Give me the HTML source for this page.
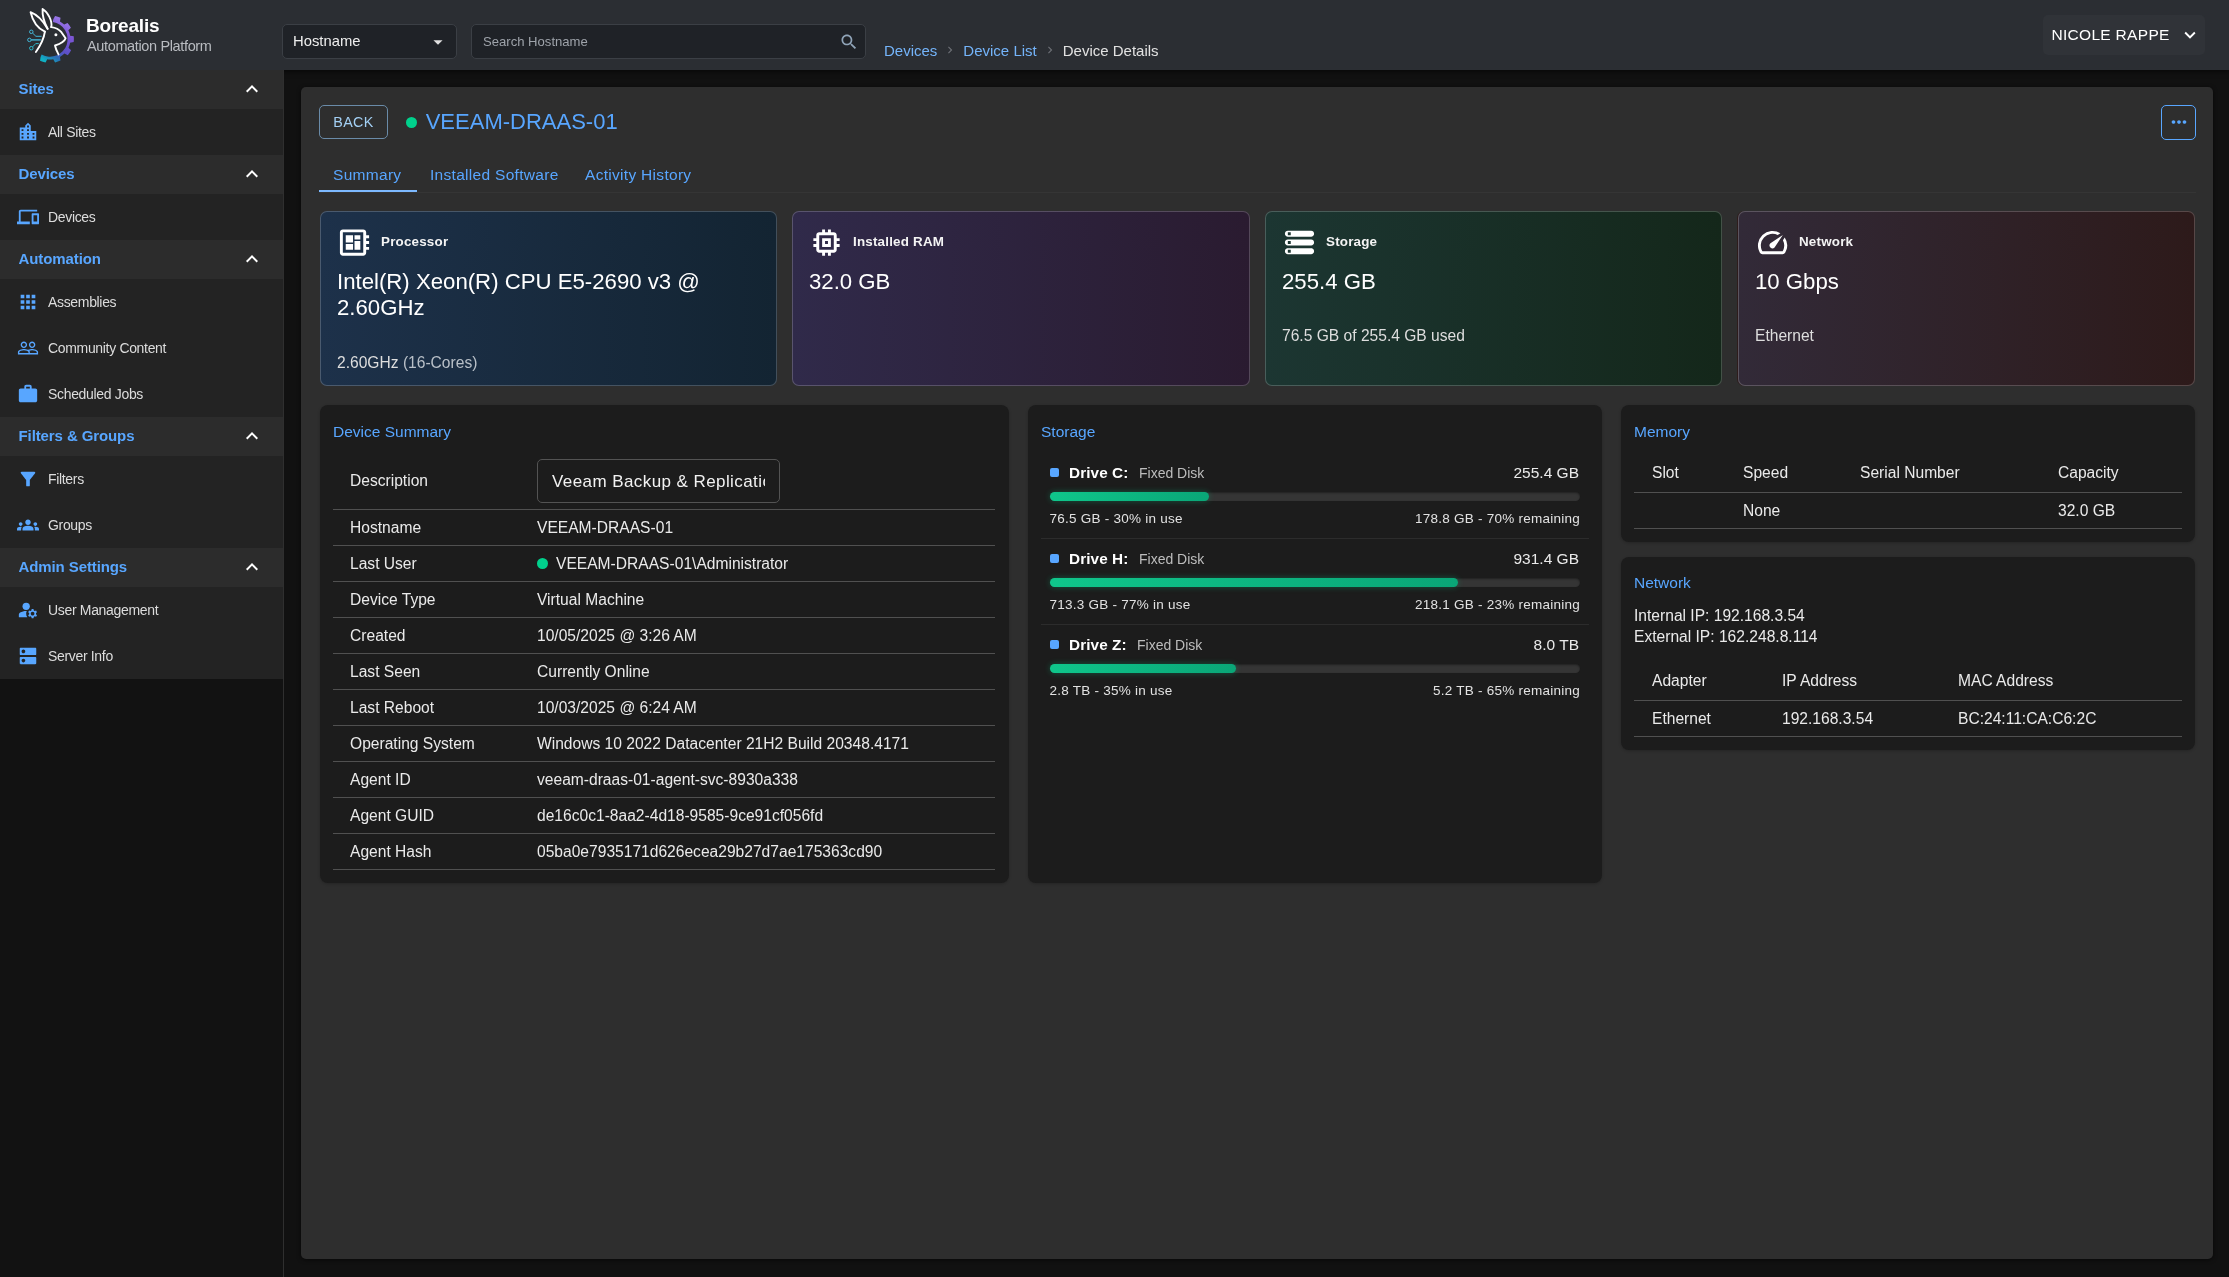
<!DOCTYPE html>
<html lang="en">
<head>
<meta charset="utf-8">
<title>Borealis - Device Details</title>
<style>
*{box-sizing:border-box;margin:0;padding:0}
html,body{width:2229px;height:1277px;overflow:hidden;background:#111111;}
body{font-family:"Liberation Sans",sans-serif;color:#e6e6e6;position:relative;-webkit-font-smoothing:antialiased}
.abs{position:absolute}
svg{display:block}
/* header */
#hdr{position:absolute;left:0;top:0;width:2229px;height:70px;background:#2b2e33;z-index:5;box-shadow:0 2px 5px rgba(0,0,0,.55)}
#brand1{position:absolute;left:86px;top:14px;font-size:19px;font-weight:700;color:#fff;letter-spacing:-.2px;line-height:24px}
#brand2{position:absolute;left:87px;top:37px;font-size:14.5px;color:#b9bcc1;line-height:18px;letter-spacing:-.36px}
.hbox{position:absolute;top:24px;height:35px;background:#1f2227;border:1px solid #3b3f45;border-radius:5px}
#sel{left:282px;width:175px}
#sel span{position:absolute;left:10px;top:7px;font-size:14.8px;line-height:18px;color:#eee}
#srch{left:471px;width:395px}
#srch span{position:absolute;left:11px;top:8px;font-size:13.1px;line-height:18px;color:#9ea3aa}
#crumbs{position:absolute;left:884px;top:41px;font-size:15px;line-height:20px;white-space:nowrap;color:#e2e2e2}
#crumbs a{color:#74b4fa;text-decoration:none}
#crumbs i{display:inline-block;width:26px;text-align:center;color:#7a7d82;font-style:normal}
#user{position:absolute;left:2043px;top:15px;width:162px;height:40px;background:#303338;border-radius:5px}
#user span{position:absolute;left:8.5px;top:10px;font-size:15.5px;line-height:20px;color:#fff;letter-spacing:.3px}
/* sidebar */
#side{position:absolute;z-index:6;left:0;top:70px;width:284px;height:1207px;background:#121212;border-right:1px solid #2f2f2f}
.sh{height:39px;background:#2c2c2c;position:relative}
.sh b{position:absolute;left:18.5px;top:8.6px;font-size:15px;letter-spacing:-.1px;line-height:19px;color:#58a6ff;font-weight:700}
.sh svg{position:absolute;left:240px;top:7.3px}
.si{height:46px;background:#232323;position:relative}
.si span{position:absolute;left:48px;top:13.6px;font-size:14px;letter-spacing:-.33px;line-height:18px;color:#dcdcdc}
.si svg{position:absolute;left:17px;top:11.5px;width:22px;height:22px}
</style>
</head>
<body>
<div id="all" style="position:absolute;left:0;top:0;width:2229px;height:1277px;will-change:transform">
<div id="hdr">
<!--LOGO_START--><svg class="abs" style="left:20px;top:0" width="70" height="70" viewBox="0 0 70 70">
<defs><linearGradient id="gg" gradientUnits="userSpaceOnUse" x1="50" y1="16" x2="24" y2="60"><stop offset="0" stop-color="#a98cf2"/><stop offset=".35" stop-color="#7d56d6"/><stop offset=".68" stop-color="#5a50c6"/><stop offset=".84" stop-color="#2a6db4"/><stop offset="1" stop-color="#0fb0c4"/></linearGradient></defs>
<path fill="url(#gg)" d="M32.84 21.92L33.28 19.15A20.3 20.3 0 0 1 33.28 19.15L35.05 15.92A23.8 23.8 0 0 1 40.53 17.81L39.94 21.45A20.3 20.3 0 0 1 44.20 24.60L47.51 22.97A23.8 23.8 0 0 1 50.92 27.66L48.35 30.30A20.3 20.3 0 0 1 50.09 35.67L53.72 36.30A23.8 23.8 0 0 1 53.72 42.10L50.09 42.73A20.3 20.3 0 0 1 48.50 47.78L51.11 50.37A23.8 23.8 0 0 1 47.79 55.13L44.45 53.55A20.3 20.3 0 0 1 39.94 56.95L40.53 60.59A23.8 23.8 0 0 1 35.05 62.48L33.28 59.25A20.3 20.3 0 0 1 27.27 59.30L25.56 62.56A23.8 23.8 0 0 1 20.04 60.77L20.57 57.12L21.62 54.51A17.5 17.5 0 1 0 32.84 21.92Z"/>
<g fill="none" stroke="#fff" stroke-width="1.9" stroke-linejoin="round" stroke-linecap="round">
<path d="M24.9 31.6C20.5 29.6 13.6 25 10.6 12.200 16.800 14.600 23.400 21.400 27.600 28.800"/>
<path d="M27.600 28.800C24 22 22.200 15 22.600 9 27.500 12 32.800 21 31.200 27.100"/>
<path d="M31.200 27.100C35.500 27.600 39 29.200 41.400 32.200L45.600 38.300C44.600 41.600 41.200 43.600 35 45.500 35.700 49 37 51.800 38.500 54.400"/>
<path d="M24.900 31.600C24 38 21.500 44 15.900 52"/>
</g>
<circle cx="35.900" cy="34.800" r="1.500" fill="#fff"/>
<g fill="none" stroke="#45c3e6" stroke-width="0.9">
<circle cx="11.300" cy="31.800" r="1.750"/><path d="M12.600 33.100L15.900 36.300H21.600"/>
<circle cx="9.400" cy="39.900" r="1.750"/><path d="M11.200 39.900H20.800" stroke-width="1.300"/>
<circle cx="11.300" cy="48.200" r="1.750" stroke="#2fc4d8"/><path d="M12.600 46.900L15.700 43.600H18.800" stroke="#2fc4d8"/>
</g>
</svg><!--LOGO_END-->
<div id="brand1">Borealis</div>
<div id="brand2">Automation Platform</div>
<div id="sel" class="hbox"><span>Hostname</span>
<svg class="abs" style="left:144px;top:6px" width="22" height="22" viewBox="0 0 24 24"><path fill="#e0e0e0" d="M7 10l5 5 5-5z"/></svg></div>
<div id="srch" class="hbox"><span>Search Hostname</span>
<svg class="abs" style="left:367px;top:7px" width="20" height="20" viewBox="0 0 24 24"><path fill="#90a4b8" d="M15.5 14h-.79l-.28-.27C15.41 12.59 16 11.11 16 9.5 16 5.910 13.090 3 9.500 3S3 5.910 3 9.500 5.910 16 9.500 16c1.610 0 3.090-.590 4.230-1.570l.270.280v.790l5 4.990L20.490 19l-4.990-5zm-6 0C7.010 14 5 11.990 5 9.500S7.010 5 9.500 5 14 7.010 14 9.500 11.990 14 9.500 14z"/></svg></div>
<div id="crumbs"><a>Devices</a><i><svg width="14" height="14" viewBox="0 0 24 24" style="display:inline-block;vertical-align:-1.4px"><path fill="#6c6f75" d="M10 6 8.590 7.410 13.170 12l-4.580 4.590L10 18l6-6z"/></svg></i><a>Device List</a><i><svg width="14" height="14" viewBox="0 0 24 24" style="display:inline-block;vertical-align:-1.4px"><path fill="#6c6f75" d="M10 6 8.590 7.410 13.170 12l-4.580 4.590L10 18l6-6z"/></svg></i>Device Details</div>
<div id="user"><span>NICOLE RAPPE</span>
<svg class="abs" style="left:136px;top:9px" width="22" height="22" viewBox="0 0 24 24"><path fill="#fff" d="M16.590 8.590 12 13.170 7.410 8.590 6 10l6 6 6-6z"/></svg></div>
</div>
<div id="side">
<div class="sh"><b>Sites</b><svg width="24" height="24" viewBox="0 0 24 24"><path fill="#fff" d="m12 8-6 6 1.410 1.410L12 10.830l4.590 4.580L18 14z"/></svg></div>
<div class="si"><svg width="24" height="24" viewBox="0 0 24 24" fill="#58a6ff"><path d="M15 11V5l-3-3-3 3v2H3v14h18V11h-6zm-8 8H5v-2h2v2zm0-4H5v-2h2v2zm0-4H5V9h2v2zm6 8h-2v-2h2v2zm0-4h-2v-2h2v2zm0-4h-2V9h2v2zm0-4h-2V5h2v2zm6 12h-2v-2h2v2zm0-4h-2v-2h2v2z"/></svg><span>All Sites</span></div>
<div class="sh"><b>Devices</b><svg width="24" height="24" viewBox="0 0 24 24"><path fill="#fff" d="m12 8-6 6 1.410 1.410L12 10.830l4.590 4.580L18 14z"/></svg></div>
<div class="si"><svg width="24" height="24" viewBox="0 0 24 24" fill="#58a6ff"><path d="M4 6h18V4H4c-1.100 0-2 .900-2 2v11H0v3h14v-3H4V6zm19 2h-6c-.550 0-1 .450-1 1v10c0 .550.450 1 1 1h6c.550 0 1-.450 1-1V9c0-.550-.450-1-1-1zm-1 9h-4v-7h4v7z"/></svg><span>Devices</span></div>
<div class="sh"><b>Automation</b><svg width="24" height="24" viewBox="0 0 24 24"><path fill="#fff" d="m12 8-6 6 1.410 1.410L12 10.830l4.590 4.580L18 14z"/></svg></div>
<div class="si"><svg width="24" height="24" viewBox="0 0 24 24" fill="#58a6ff"><path d="M4 8h4V4H4v4zm6 12h4v-4h-4v4zm-6 0h4v-4H4v4zm0-6h4v-4H4v4zm6 0h4v-4h-4v4zm6-10v4h4V4h-4zm-6 4h4V4h-4v4zm6 6h4v-4h-4v4zm0 6h4v-4h-4v4z"/></svg><span>Assemblies</span></div>
<div class="si"><svg width="24" height="24" viewBox="0 0 24 24" fill="#58a6ff"><path d="M16.500 13c-1.200 0-3.070.340-4.500 1-1.430-.670-3.300-1-4.500-1C5.330 13 1 14.080 1 16.250V19h22v-2.750c0-2.170-4.330-3.250-6.500-3.250zm-4 4.500h-10v-1.250c0-.540 2.560-1.750 5-1.750s5 1.210 5 1.750v1.250zm9 0H14v-1.250c0-.460-.200-.860-.520-1.220.880-.300 1.960-.530 3.020-.530 2.440 0 5 1.210 5 1.750v1.250zM7.500 12c1.930 0 3.500-1.570 3.500-3.500S9.430 5 7.500 5 4 6.570 4 8.500 5.570 12 7.500 12zm0-5.500c1.100 0 2 .900 2 2s-.900 2-2 2-2-.900-2-2 .900-2 2-2zm9 5.500c1.930 0 3.500-1.570 3.500-3.500S18.430 5 16.500 5 13 6.570 13 8.500s1.570 3.500 3.500 3.500zm0-5.500c1.100 0 2 .900 2 2s-.900 2-2 2-2-.900-2-2 .900-2 2-2z"/></svg><span>Community Content</span></div>
<div class="si"><svg width="24" height="24" viewBox="0 0 24 24" fill="#58a6ff"><path d="M20 6h-4V4c0-1.110-.890-2-2-2h-4c-1.110 0-2 .890-2 2v2H4c-1.110 0-1.990.890-1.990 2L2 19c0 1.110.890 2 2 2h16c1.110 0 2-.890 2-2V8c0-1.110-.890-2-2-2zm-6 0h-4V4h4v2z"/></svg><span>Scheduled Jobs</span></div>
<div class="sh"><b>Filters &amp; Groups</b><svg width="24" height="24" viewBox="0 0 24 24"><path fill="#fff" d="m12 8-6 6 1.410 1.410L12 10.830l4.590 4.580L18 14z"/></svg></div>
<div class="si"><svg width="24" height="24" viewBox="0 0 24 24" fill="#58a6ff"><path d="M4.250 5.610C6.270 8.200 10 13 10 13v6c0 .550.450 1 1 1h2c.550 0 1-.450 1-1v-6s3.720-4.800 5.740-7.390c.510-.660.040-1.610-.790-1.610H5.040c-.830 0-1.300.950-.790 1.610z"/></svg><span>Filters</span></div>
<div class="si"><svg width="24" height="24" viewBox="0 0 24 24" fill="#58a6ff"><path d="M12 12.750c1.630 0 3.070.390 4.240.900 1.080.480 1.760 1.560 1.760 2.730V18H6v-1.610c0-1.180.680-2.260 1.760-2.730 1.170-.520 2.610-.910 4.240-.910zM4 13c1.100 0 2-.900 2-2s-.900-2-2-2-2 .900-2 2 .900 2 2 2zm1.130 1.100c-.370-.060-.740-.100-1.130-.100-.990 0-1.930.210-2.780.580C.480 14.900 0 15.620 0 16.430V18h4.500v-1.610c0-.830.230-1.610.630-2.290zM20 13c1.100 0 2-.900 2-2s-.900-2-2-2-2 .900-2 2 .900 2 2 2zm4 3.430c0-.810-.480-1.530-1.220-1.850-.850-.370-1.790-.580-2.780-.580-.390 0-.760.040-1.130.100.400.680.630 1.460.630 2.290V18H24v-1.570zM12 6c1.660 0 3 1.340 3 3s-1.340 3-3 3-3-1.340-3-3 1.340-3 3-3z"/></svg><span>Groups</span></div>
<div class="sh"><b>Admin Settings</b><svg width="24" height="24" viewBox="0 0 24 24"><path fill="#fff" d="m12 8-6 6 1.410 1.410L12 10.830l4.590 4.580L18 14z"/></svg></div>
<div class="si"><svg width="24" height="24" viewBox="0 0 24 24" fill="#58a6ff"><circle cx="10" cy="8" r="4"/><path d="M10.670 13.020c-.220-.010-.440-.020-.670-.020-2.420 0-4.680.670-6.610 1.820-.880.520-1.390 1.500-1.390 2.530V20h9.260c-.790-1.130-1.260-2.510-1.260-4 0-1.070.250-2.070.670-2.980zM20.750 16c0-.220-.030-.420-.060-.630l1.140-1.010-1-1.730-1.450.490c-.320-.270-.680-.480-1.080-.630L18 11h-2l-.300 1.490c-.400.150-.760.360-1.080.630l-1.450-.490-1 1.730 1.140 1.010c-.030.210-.060.410-.060.630s.030.420.060.630l-1.140 1.010 1 1.730 1.450-.490c.320.270.680.480 1.080.630L16 21h2l.300-1.490c.400-.150.760-.360 1.080-.630l1.450.490 1-1.730-1.140-1.010c.030-.210.060-.410.060-.630zM17 18c-1.100 0-2-.900-2-2s.900-2 2-2 2 .900 2 2-.900 2-2 2z"/></svg><span>User Management</span></div>
<div class="si"><svg width="24" height="24" viewBox="0 0 24 24" fill="#58a6ff"><path d="M20 13H4c-.550 0-1 .450-1 1v6c0 .550.450 1 1 1h16c.550 0 1-.450 1-1v-6c0-.550-.450-1-1-1zM7 19c-1.100 0-2-.900-2-2s.900-2 2-2 2 .900 2 2-.900 2-2 2zM20 3H4c-.550 0-1 .450-1 1v6c0 .550.450 1 1 1h16c.550 0 1-.450 1-1V4c0-.550-.450-1-1-1zM7 9c-1.100 0-2-.900-2-2s.900-2 2-2 2 .900 2 2-.900 2-2 2z"/></svg><span>Server Info</span></div>
</div>
<style>
#paper{position:absolute;left:301px;top:87px;width:1912px;height:1172px;background:#2e2e2e;border-radius:5px;box-shadow:0 1px 4px rgba(0,0,0,.6)}
#back{position:absolute;left:319px;top:105px;width:69px;height:34px;border:1px solid #6a8ba8;border-radius:5px;color:#a3d0f5;font-size:14.3px;letter-spacing:.4px;line-height:32px;text-align:center}
#dot{position:absolute;left:405.8px;top:116.6px;width:11.5px;height:11.5px;border-radius:50%;background:#00d18c}
#title{position:absolute;left:425.7px;top:107px;font-size:22px;line-height:30px;color:#58a6ff;white-space:nowrap}
#more{position:absolute;left:2161px;top:105px;width:35px;height:35px;border:1px solid #58a6ff;border-radius:5px}
.tab{position:absolute;top:165px;font-size:15.5px;letter-spacing:.3px;line-height:20px;color:#58a6ff;white-space:nowrap}
#tabline{position:absolute;left:319px;top:192px;width:1877px;height:1px;background:#353535}
#tabind{position:absolute;left:319px;top:190px;width:98px;height:2px;background:#7db9ff}
.card{position:absolute;top:211px;width:457px;height:175px;border-radius:7px;border:1px solid rgba(255,255,255,.2);background-origin:border-box}
.card svg{position:absolute;left:16px;top:12.6px;width:35px;height:35px}
.card b{position:absolute;left:60px;top:20.9px;font-size:13.4px;line-height:18px;color:#f4f4f4;letter-spacing:.2px}
.card .v{position:absolute;left:16px;top:56.5px;font-size:22.2px;line-height:26px;color:#fff;width:420px}
.card .s{position:absolute;left:16px;margin-top:1px;font-size:15.6px;line-height:18px;color:#dedede;white-space:nowrap}
</style>
<div id="paper"></div>
<div id="back">BACK</div>
<div id="dot"></div>
<div id="title">VEEAM-DRAAS-01</div>
<div id="more"><svg class="abs" style="left:5.5px;top:5px" width="22" height="22" viewBox="0 0 24 24"><path fill="#58a6ff" d="M6 10c-1.100 0-2 .900-2 2s.900 2 2 2 2-.900 2-2-.900-2-2-2zm12 0c-1.100 0-2 .900-2 2s.900 2 2 2 2-.900 2-2-.900-2-2-2zm-6 0c-1.100 0-2 .900-2 2s.900 2 2 2 2-.900 2-2-.900-2-2-2z"/></svg></div>
<div class="tab" style="left:333px">Summary</div>
<div class="tab" style="left:430px">Installed Software</div>
<div class="tab" style="left:585px">Activity History</div>
<div id="tabline"></div><div id="tabind"></div>

<div class="card" style="left:320px;background-image:linear-gradient(90deg,#1d314a,#132432)">
<svg width="32" height="32" viewBox="0 0 24 24"><path fill="#fff" d="M22 9V7h-2V5c0-1.100-.900-2-2-2H4c-1.100 0-2 .900-2 2v14c0 1.100.900 2 2 2h14c1.100 0 2-.900 2-2v-2h2v-2h-2v-2h2v-2h-2V9h2zm-4 10H4V5h14v14zM6 13h5v4H6zm6-6h4v3h-4zM6 7h5v5H6zm6 4h4v6h-4z"/></svg>
<b>Processor</b><div class="v">Intel(R) Xeon(R) CPU E5-2690 v3 @ 2.60GHz</div>
<div class="s" style="top:141px">2.60GHz <span style="color:#b9c0c8">(16-Cores)</span></div></div>

<div class="card" style="left:792px;width:458px;background-image:linear-gradient(90deg,#302a4a,#2a1b30)">
<svg width="32" height="32" viewBox="0 0 24 24"><path fill="#fff" d="M15 9H9v6h6V9zm-2 4h-2v-2h2v2zm8-2V9h-2V7c0-1.100-.900-2-2-2h-2V3h-2v2h-2V3H9v2H7c-1.100 0-2 .900-2 2v2H3v2h2v2H3v2h2v2c0 1.100.900 2 2 2h2v2h2v-2h2v2h2v-2h2c1.100 0 2-.900 2-2v-2h2v-2h-2v-2h2zm-4 6H7V7h10v10z"/></svg>
<b>Installed RAM</b><div class="v">32.0 GB</div></div>

<div class="card" style="left:1265px;background-image:linear-gradient(90deg,#1c3632,#14271a)">
<svg width="32" height="32" viewBox="0 0 24 24"><path fill="#fff" d="M4 20h16c1.100 0 2-.900 2-2s-.900-2-2-2H4c-1.100 0-2 .900-2 2s.900 2 2 2zm0-3h2v2H4v-2zM2 6c0 1.100.900 2 2 2h16c1.100 0 2-.900 2-2s-.900-2-2-2H4c-1.100 0-2 .900-2 2zm4 1H4V5h2v2zm-2 7h16c1.100 0 2-.900 2-2s-.900-2-2-2H4c-1.100 0-2 .900-2 2s.900 2 2 2zm0-3h2v2H4v-2z"/></svg>
<b>Storage</b><div class="v">255.4 GB</div><div class="s" style="top:114px">76.5 GB of 255.4 GB used</div></div>

<div class="card" style="left:1738px;background-image:linear-gradient(90deg,#322a38,#2d1a1a);box-shadow:-1px 0 0 #2e1c1c">
<svg width="32" height="32" viewBox="0 0 24 24"><path fill="#fff" d="m20.380 8.570-1.230 1.850a8 8 0 0 1-.220 7.580H5.070A8 8 0 0 1 15.580 6.850l1.850-1.230A10 10 0 0 0 3.350 19a2 2 0 0 0 1.720 1h13.850a2 2 0 0 0 1.740-1 10 10 0 0 0-.270-10.440zm-9.790 6.840a2 2 0 0 0 2.830 0l5.660-8.490-8.490 5.660a2 2 0 0 0 0 2.830z"/></svg>
<b>Network</b><div class="v">10 Gbps</div><div class="s" style="top:114px">Ethernet</div></div>
<!--M2S--><style>
.pnl{position:absolute;background:#1c1c1c;border-radius:8px;box-shadow:0 1px 3px rgba(0,0,0,.22)}
.pt{position:absolute;font-size:15.5px;line-height:20px;color:#58a6ff;white-space:nowrap}
.ln{position:absolute;height:1px;background:#505050}
.t{position:absolute;font-size:15.6px;line-height:20px;color:#eaeaea;white-space:nowrap}
#desc{position:absolute;left:537px;top:459px;width:243px;height:44px;border:1px solid #535353;border-radius:5px;overflow:hidden}
#desc span{position:absolute;left:14px;top:12px;width:213px;overflow:hidden;white-space:nowrap;font-size:17px;line-height:20px;color:#f2f2f2;letter-spacing:.42px}
.sq{position:absolute;left:1050px;width:9px;height:9px;border-radius:2px;background:#58a6ff}
.dn{position:absolute;left:1069px;font-size:15.3px;line-height:20px;font-weight:700;color:#fff;white-space:nowrap;letter-spacing:.1px}
.dt{position:absolute;margin-top:.5px;font-size:14px;line-height:18px;color:#bdbdbd;white-space:nowrap}
.dv{position:absolute;right:650px;font-size:15.5px;line-height:20px;color:#eaeaea;white-space:nowrap}
.bar{position:absolute;left:1050px;width:530px;height:9px;border-radius:5px;background:#353535;box-shadow:inset 0 1px 2px rgba(0,0,0,.4)}
.bar i{display:block;height:9px;border-radius:5px;background:linear-gradient(90deg,#0fc68b,#0aa677);box-shadow:0 0 6px rgba(0,209,140,.32)}
.du{position:absolute;margin-top:1px;font-size:13.5px;line-height:18px;color:#e2e2e2;white-space:nowrap;letter-spacing:.25px}
.dl{position:absolute;left:1041px;width:548px;height:1px;background:#2c2c2c}
</style>
<div class="pnl" style="left:320px;top:405px;width:689px;height:478px"></div>
<div class="pt" style="left:333px;top:422px">Device Summary</div>
<div class="t" style="left:350px;top:471px">Description</div>
<div id="desc"><span>Veeam Backup &amp; Replication Server</span></div>
<div class="ln" style="left:333px;top:509px;width:662px"></div>
<div class="t" style="left:350px;top:518px">Hostname</div><div class="t" style="left:537px;top:518px">VEEAM-DRAAS-01</div>
<div class="ln" style="left:333px;top:545px;width:662px"></div>
<div class="t" style="left:350px;top:554px">Last User</div><div class="t" style="left:537px;top:554px"><i style="display:inline-block;width:11px;height:11px;border-radius:50%;background:#00d18c;margin-right:8px"></i>VEEAM-DRAAS-01\Administrator</div>
<div class="ln" style="left:333px;top:581px;width:662px"></div>
<div class="t" style="left:350px;top:590px">Device Type</div><div class="t" style="left:537px;top:590px">Virtual Machine</div>
<div class="ln" style="left:333px;top:617px;width:662px"></div>
<div class="t" style="left:350px;top:626px">Created</div><div class="t" style="left:537px;top:626px">10/05/2025 @ 3:26 AM</div>
<div class="ln" style="left:333px;top:653px;width:662px"></div>
<div class="t" style="left:350px;top:662px">Last Seen</div><div class="t" style="left:537px;top:662px">Currently Online</div>
<div class="ln" style="left:333px;top:689px;width:662px"></div>
<div class="t" style="left:350px;top:698px">Last Reboot</div><div class="t" style="left:537px;top:698px">10/03/2025 @ 6:24 AM</div>
<div class="ln" style="left:333px;top:725px;width:662px"></div>
<div class="t" style="left:350px;top:734px">Operating System</div><div class="t" style="left:537px;top:734px">Windows 10 2022 Datacenter 21H2 Build 20348.4171</div>
<div class="ln" style="left:333px;top:761px;width:662px"></div>
<div class="t" style="left:350px;top:770px">Agent ID</div><div class="t" style="left:537px;top:770px">veeam-draas-01-agent-svc-8930a338</div>
<div class="ln" style="left:333px;top:797px;width:662px"></div>
<div class="t" style="left:350px;top:806px">Agent GUID</div><div class="t" style="left:537px;top:806px">de16c0c1-8aa2-4d18-9585-9ce91cf056fd</div>
<div class="ln" style="left:333px;top:833px;width:662px"></div>
<div class="t" style="left:350px;top:842px">Agent Hash</div><div class="t" style="left:537px;top:842px">05ba0e7935171d626ecea29b27d7ae175363cd90</div>
<div class="ln" style="left:333px;top:869px;width:662px"></div>
<div class="pnl" style="left:1028px;top:405px;width:574px;height:478px"></div>
<div class="pt" style="left:1041px;top:422px">Storage</div>
<div class="sq" style="top:468px"></div><div class="dn" style="top:463px">Drive C:</div><div class="dt" style="left:1139px;top:463px">Fixed Disk</div><div class="dv" style="top:463px">255.4 GB</div>
<div class="bar" style="top:492px"><i style="width:30%"></i></div>
<div class="du" style="left:1049.5px;top:509px">76.5 GB - 30% in use</div><div class="du" style="right:649px;top:509px">178.8 GB - 70% remaining</div>
<div class="dl" style="top:538px"></div>
<div class="sq" style="top:554px"></div><div class="dn" style="top:549px">Drive H:</div><div class="dt" style="left:1139px;top:549px">Fixed Disk</div><div class="dv" style="top:549px">931.4 GB</div>
<div class="bar" style="top:578px"><i style="width:77%"></i></div>
<div class="du" style="left:1049.5px;top:595px">713.3 GB - 77% in use</div><div class="du" style="right:649px;top:595px">218.1 GB - 23% remaining</div>
<div class="dl" style="top:624px"></div>
<div class="sq" style="top:640px"></div><div class="dn" style="top:635px">Drive Z:</div><div class="dt" style="left:1137px;top:635px">Fixed Disk</div><div class="dv" style="top:635px">8.0 TB</div>
<div class="bar" style="top:664px"><i style="width:35%"></i></div>
<div class="du" style="left:1049.5px;top:681px">2.8 TB - 35% in use</div><div class="du" style="right:649px;top:681px">5.2 TB - 65% remaining</div>
<div class="pnl" style="left:1621px;top:405px;width:574px;height:137px"></div>
<div class="pt" style="left:1634px;top:422px">Memory</div>
<div class="t" style="left:1652px;top:463px">Slot</div>
<div class="t" style="left:1743px;top:463px">Speed</div>
<div class="t" style="left:1860px;top:463px">Serial Number</div>
<div class="t" style="left:2058px;top:463px">Capacity</div>
<div class="ln" style="left:1634px;top:492px;width:548px"></div>
<div class="t" style="left:1743px;top:501px">None</div><div class="t" style="left:2058px;top:501px">32.0 GB</div>
<div class="ln" style="left:1634px;top:528px;width:548px"></div>
<div class="pnl" style="left:1621px;top:557px;width:574px;height:193px"></div>
<div class="pt" style="left:1634px;top:573px">Network</div>
<div class="t" style="left:1634px;top:606px">Internal IP: 192.168.3.54</div><div class="t" style="left:1634px;top:627px">External IP: 162.248.8.114</div>
<div class="t" style="left:1652px;top:671px">Adapter</div>
<div class="t" style="left:1782px;top:671px">IP Address</div>
<div class="t" style="left:1958px;top:671px">MAC Address</div>
<div class="ln" style="left:1634px;top:700px;width:548px"></div>
<div class="t" style="left:1652px;top:709px">Ethernet</div>
<div class="t" style="left:1782px;top:709px">192.168.3.54</div>
<div class="t" style="left:1958px;top:709px">BC:24:11:CA:C6:2C</div>
<div class="ln" style="left:1634px;top:736px;width:548px"></div><!--M2E-->

</div>
</body>
</html>
